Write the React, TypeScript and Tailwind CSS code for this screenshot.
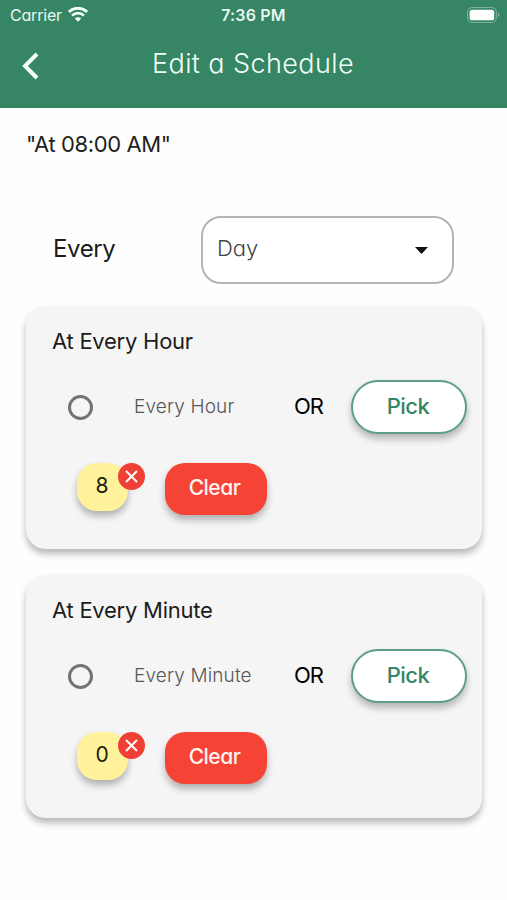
import { useState } from "react";

interface ScheduleCardProps {
  title: string;
  label: string;
  initial: number[];
}

function WifiIcon() {
  return (
    <svg width="20" height="15" viewBox="0 0 20 15" fill="none" aria-hidden="true">
      <path d="M.9 5a12.9 12.9 0 0 1 18.2 0" stroke="#f0fff8" strokeWidth="2.9" />
      <path d="M4.1 8.6a8.3 8.3 0 0 1 11.8 0" stroke="#f0fff8" strokeWidth="2.7" />
      <path d="M10 14.8 6.8 11.6a4.6 4.6 0 0 1 6.4 0Z" fill="#f0fff8" />
    </svg>
  );
}

function BatteryIcon() {
  return (
    <svg width="33" height="16" viewBox="0 0 33 16" aria-hidden="true">
      <rect x="0.5" y="0.6" width="28.8" height="14.8" rx="4.4" fill="none" stroke="#85b7a1" />
      <rect x="2.6" y="2.7" width="24.6" height="10.6" rx="2.6" fill="#fff" />
      <path d="M31 5.6c1.8.8 1.8 4 0 4.8Z" fill="#85b7a1" />
    </svg>
  );
}

function StatusBar() {
  return (
    <div className="grid h-[29px] grid-cols-3 items-center pr-[7px] pl-[10px] text-[#e8f7ef]">
      <div className="flex items-center gap-[6px] text-base">
        <span className="tracking-[-0.2px]">Carrier</span>
        <WifiIcon />
      </div>
      <span className="pr-[3px] text-center text-base font-semibold tracking-[0.2px] whitespace-nowrap">7:36 PM</span>
      <div className="flex justify-end">
        <BatteryIcon />
      </div>
    </div>
  );
}

function Header() {
  return (
    <header className="h-[108px] bg-[#368564]">
      <StatusBar />
      <div className="flex h-[70px] items-center">
        <button type="button" aria-label="Back" className="ml-[22px] w-[18px]">
          <svg width="18" height="28" viewBox="0 0 18 28" fill="none" className="mt-[3px]">
            <path d="M15 2 3 14l12 12" stroke="#f4fffa" strokeWidth="4" />
          </svg>
        </button>
        <h1 className="ml-[112px] text-[27px] font-light tracking-[0.4px] whitespace-nowrap text-[#effff7]">
          Edit a Schedule
        </h1>
      </div>
    </header>
  );
}

function ScheduleCard({ title, label, initial }: ScheduleCardProps) {
  const [values, setValues] = useState(initial);
  const [every, setEvery] = useState(false);

  return (
    <section className="h-[243px] rounded-[20px] bg-[#f5f5f5] pt-[18px] shadow-[0_5px_7px_rgba(0,0,0,0.28)]">
      <h2 className="pl-[26px] text-[22px] leading-[34px] tracking-[-0.25px] text-[#1c1c1c]">{title}</h2>
      <div className="mt-[22px] flex h-[54px] items-center">
        <button
          type="button"
          role="radio"
          aria-label={label}
          aria-checked={every}
          onClick={() => setEvery(!every)}
          className="ml-[42px] flex size-[25px] items-center justify-center rounded-full border-[3px] border-[#737373]"
        >
          {every && <span className="size-3 rounded-full bg-[#368564]" />}
        </button>
        <span className="ml-[41px] w-[160px] text-[19px] font-light tracking-[0.15px] whitespace-nowrap text-[#555]">
          {label}
        </span>
        <span className="w-[57px] pb-[2px] text-[22px] tracking-[-1px] text-black">OR</span>
        <button
          type="button"
          className="h-[54px] w-[116px] rounded-full border-2 border-[#5c9f85] bg-white pr-[2px] pb-[2px] text-[22px] font-medium tracking-[-0.6px] text-[#368564] shadow-[0_5px_7px_rgba(0,0,0,0.26)]"
        >
          Pick
        </button>
      </div>
      <div className="mt-[29px] flex items-start pl-[51px]">
        <div className="flex w-[88px]">
          {values.map((value) => (
            <div
              key={value}
              className="relative flex h-[48px] w-[51px] items-center justify-center rounded-[20px] bg-[#fff29a] pr-px pb-[2px] text-[21px] text-[#22200f] shadow-[0_5px_7px_rgba(0,0,0,0.28)]"
            >
              {value}
              <button
                type="button"
                aria-label={`Remove ${value}`}
                onClick={() => setValues(values.filter((v) => v !== value))}
                className="absolute top-0 -right-[17px] flex size-[27px] items-center justify-center rounded-full bg-[#f03f34]"
              >
                <svg width="13" height="13" viewBox="0 0 13 13" fill="none">
                  <path d="m1 1 11 11M12 1 1 12" stroke="#fff" strokeWidth="2" />
                </svg>
              </button>
            </div>
          ))}
        </div>
        <button
          type="button"
          onClick={() => setValues([])}
          className="h-[52px] w-[102px] rounded-[20px] bg-[#f54336] pr-[3px] pb-[2px] text-[21px] font-medium tracking-[-0.5px] text-[#fff5f3] shadow-[0_5px_7px_rgba(0,0,0,0.28)]"
        >
          Clear
        </button>
      </div>
    </section>
  );
}

export default function App() {
  return (
    <div className="h-[900px] w-full overflow-hidden bg-[#fefefe] font-['Inter','Liberation_Sans',sans-serif] [font-feature-settings:'cv11']">
      <Header />
      <main className="pr-[25px] pl-[26px]">
        <p className="pt-[19px] text-[22px] leading-[34px] tracking-[-0.4px] text-[#222]">"At 08:00 AM"</p>
        <div className="mt-[55px] flex h-[68px] items-center">
          <span className="w-[175px] pb-[2px] pl-[27px] text-[24px] tracking-[-0.4px] text-[#1c1c1c]">Every</span>
          <button
            type="button"
            className="flex h-[68px] w-[253px] items-center justify-between rounded-[20px] border-2 border-[#b4b4b4] bg-white pr-[24px] pl-[14px]"
          >
            <span className="pb-[3px] text-[22px] font-light text-[#444]">Day</span>
            <svg width="13" height="7" viewBox="0 0 13 7" aria-hidden="true">
              <path d="M0 0h13L6.5 7Z" fill="#111" />
            </svg>
          </button>
        </div>
        <div className="mt-[22px] flex flex-col gap-[26px]">
          <ScheduleCard title="At Every Hour" label="Every Hour" initial={[8]} />
          <ScheduleCard title="At Every Minute" label="Every Minute" initial={[0]} />
        </div>
      </main>
    </div>
  );
}
